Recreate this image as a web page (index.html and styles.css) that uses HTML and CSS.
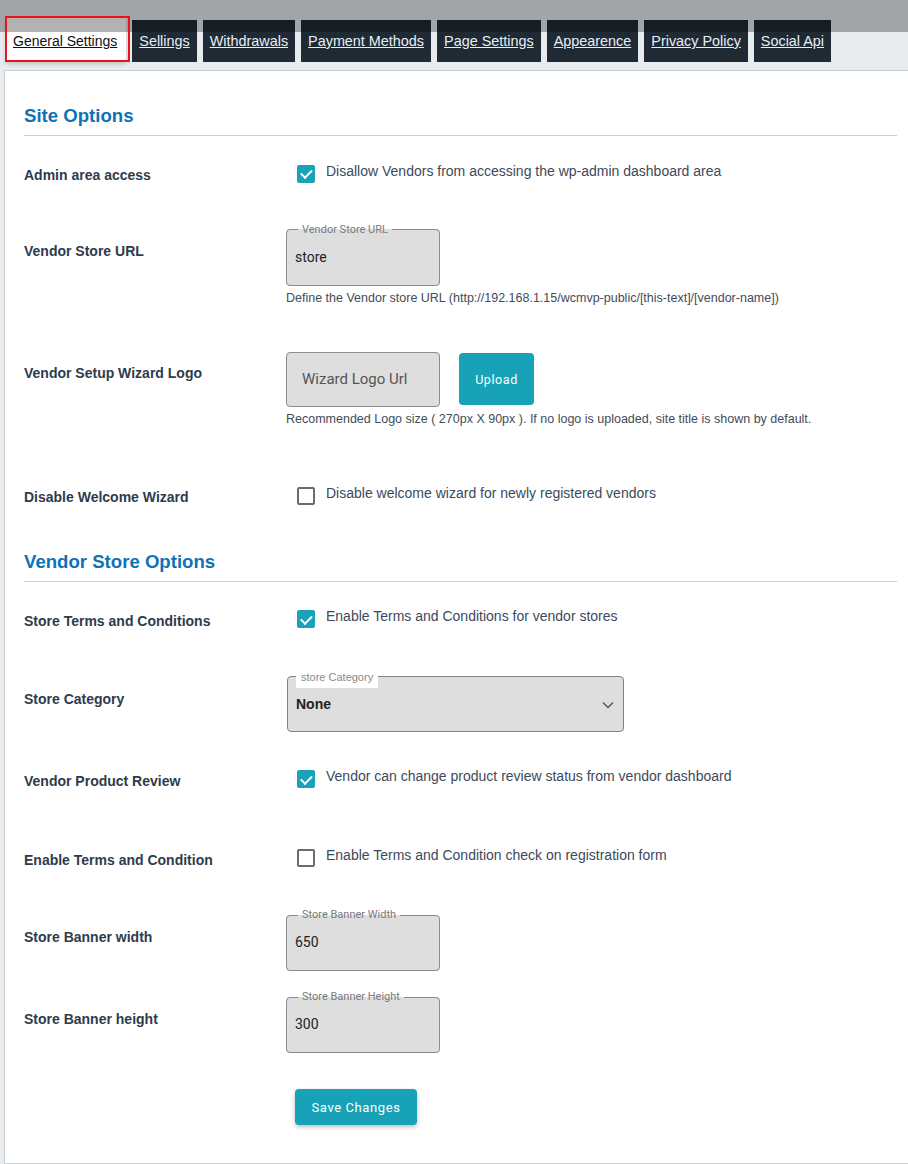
FILE: index.html
```html
<!DOCTYPE html>
<html>
<head>
<meta charset="utf-8">
<link rel="stylesheet" href="styles.css">
</head>
<body>
<div class="dim"></div>
<nav class="tabs">
  <a class="tab active" href="#">General Settings</a>
  <a class="tab" href="#">Sellings</a>
  <a class="tab" href="#">Withdrawals</a>
  <a class="tab" href="#">Payment Methods</a>
  <a class="tab" href="#">Page Settings</a>
  <a class="tab" href="#">Appearence</a>
  <a class="tab" href="#">Privacy Policy</a>
  <a class="tab" href="#">Social Api</a>
</nav>
<main class="panel">
  <h2 class="section-title">Site Options</h2>
  <div class="grid grid-site">
    <div class="label label-check">Admin area access</div>
    <div class="check"><span class="box on"></span><span class="check-text">Disallow Vendors from accessing the wp-admin dashboard area</span></div>

    <div class="label label-field">Vendor Store URL</div>
    <div class="stack">
      <fieldset class="field"><legend>Vendor Store URL</legend><div class="value">store</div></fieldset>
      <div class="help">Define the Vendor store URL (http://192.168.1.15/wcmvp-public/[this-text]/[vendor-name])</div>
    </div>

    <div class="label label-plain">Vendor Setup Wizard Logo</div>
    <div class="stack">
      <div class="upload-row">
        <div class="plain-input">Wizard Logo Url</div>
        <button class="btn btn-upload">Upload</button>
      </div>
      <div class="help">Recommended Logo size ( 270px X 90px ). If no logo is uploaded, site title is shown by default.</div>
    </div>

    <div class="label label-check">Disable Welcome Wizard</div>
    <div class="check"><span class="box"></span><span class="check-text">Disable welcome wizard for newly registered vendors</span></div>
  </div>

  <h2 class="section-title">Vendor Store Options</h2>
  <div class="grid grid-store">
    <div class="label label-check">Store Terms and Conditions</div>
    <div class="check"><span class="box on"></span><span class="check-text">Enable Terms and Conditions for vendor stores</span></div>

    <div class="label label-field">Store Category</div>
    <div class="select-wrap">
      <span class="select-legend">store Category</span>
      <div class="select-box"><span class="select-value">None</span>
        <svg class="chev" width="12" height="8" viewBox="0 0 12 8"><path d="M1 1.5 L6 6.5 L11 1.5" fill="none" stroke="#555" stroke-width="1.4"/></svg>
      </div>
    </div>

    <div class="label label-check">Vendor Product Review</div>
    <div class="check"><span class="box on"></span><span class="check-text">Vendor can change product review status from vendor dashboard</span></div>

    <div class="label label-check">Enable Terms and Condition</div>
    <div class="check"><span class="box"></span><span class="check-text">Enable Terms and Condition check on registration form</span></div>

    <div class="label label-field">Store Banner width</div>
    <div class="stack">
      <fieldset class="field"><legend>Store Banner Width</legend><div class="value">650</div></fieldset>
    </div>

    <div class="label label-field">Store Banner height</div>
    <div class="stack">
      <fieldset class="field"><legend>Store Banner Height</legend><div class="value">300</div></fieldset>
    </div>

    <div></div>
    <div><button class="btn btn-save">Save Changes</button></div>
  </div>
</main>
</body>
</html>
```
FILE: styles.css
```css
html { overflow: hidden; }
body {
  margin: 0;
  background: #e9ecef;
  font-family: "Liberation Sans", Arial, sans-serif;
  position: relative;
}
.dim {
  position: absolute;
  top: 0; left: 0; right: 0;
  height: 32px;
  background: rgba(0, 0, 0, 0.3);
  z-index: 2;
}
.tabs {
  display: flex;
  align-items: flex-end;
  gap: 6px;
  padding: 18px 0 0 6px;
}
.tab {
  display: block;
  height: 42px;
  line-height: 42px;
  padding: 0 7px;
  background: #1f2a35;
  color: #e8eef4;
  font-size: 14.4px;
  text-decoration: underline;
  text-underline-offset: 1px;
}
.tab.active {
  background: #fff;
  color: #111;
  height: 44px;
  line-height: 46px;
  padding: 0 9px 0 7px;
  font-size: 14px;
  position: relative;
  box-shadow: 0 2px 4px rgba(0,0,0,0.18);
}
.tab.active::after {
  content: "";
  position: absolute;
  left: -1px; right: -4px; top: -2px; bottom: 0;
  border: 2px solid #e8141b;
  z-index: 3;
}
.panel {
  margin: 8px 0 0 4px;
  background: #fff;
  border: 1px solid #c9cdd1;
  border-right: none;
  padding: 33px 11px 38px 19px;
}
.section-title {
  margin: 0 0 25.5px;
  font-size: 18.6px;
  line-height: 24px;
  font-weight: bold;
  color: #0f72b6;
  padding-bottom: 7px;
  border-bottom: 1px solid #cfcfcf;
}
.grid {
  display: grid;
  grid-template-columns: 262px 1fr;
  align-items: start;
}
.grid-site { grid-template-rows: 62px 128px 132px 66px; }
.grid-store { grid-template-rows: 64px 96px 79px 63px 82px 98px 36px; }
.label {
  font-size: 14px;
  font-weight: bold;
  line-height: 17px;
  color: #2e3b4c;
}
.label-check { margin-top: 5.5px; }
.label-field { margin-top: 19.5px; }
.label-plain { margin-top: 13.5px; }

.check {
  display: flex;
  align-items: flex-start;
  gap: 11px;
  padding-left: 11px;
}
.box {
  box-sizing: border-box;
  flex: none;
  width: 18px;
  height: 18px;
  margin-top: 3px;
  border: 2px solid #6b6b6b;
  border-radius: 2px;
  background: #fff;
  position: relative;
}
.box.on {
  background: #1aa3b8;
  border-color: #1aa3b8;
}
.box.on::after {
  content: "";
  position: absolute;
  left: 3.5px; top: 0.5px;
  width: 4.5px; height: 9px;
  border: solid #fff;
  border-width: 0 2px 2px 0;
  transform: rotate(45deg);
}
.check-text {
  font-size: 14px;
  line-height: 18px;
  color: #3c4a5c;
}
.stack {
  display: flex;
  flex-direction: column;
  align-items: flex-start;
}
.field {
  box-sizing: border-box;
  width: 154px;
  margin: 0;
  padding: 0 8px;
  min-inline-size: 0;
  border: 1px solid #8c8c8c;
  border-radius: 4px;
  background: #dedede;
}
.field legend {
  margin-left: 3px;
  padding: 0 4px;
  font-family: Roboto, "Liberation Sans", sans-serif;
  font-size: 11px;
  line-height: 12px;
  color: #7a7a7a;
}
.value {
  height: 49px;
  line-height: 42px;
  font-family: Roboto, "Liberation Sans", sans-serif;
  font-size: 14px;
  color: #222;
}
.help {
  margin-top: 5px;
  font-size: 12.5px;
  line-height: 15px;
  color: #3f4c5a;
  white-space: nowrap;
}
.upload-row {
  display: flex;
  align-items: center;
  gap: 19px;
}
.plain-input {
  box-sizing: border-box;
  width: 154px;
  height: 55px;
  border: 1px solid #8c8c8c;
  border-radius: 4px;
  background: #dedede;
  padding-left: 15px;
  line-height: 53px;
  font-family: Roboto, "Liberation Sans", sans-serif;
  font-size: 15px;
  color: #555;
}
.btn {
  border: none;
  border-radius: 4px;
  background: #17a2b8;
  color: #fff;
  font-family: Roboto, "Liberation Sans", sans-serif;
  letter-spacing: 0.6px;
  cursor: pointer;
}
.btn-upload {
  width: 75px;
  height: 52px;
  font-size: 12.5px;
  font-weight: 400;
  padding: 0;
}
.btn-save {
  margin-left: 9px;
  width: 122px;
  height: 36px;
  font-size: 13px;
  padding: 0;
  box-shadow: 0 2px 4px rgba(0,0,0,0.25);
}
.select-wrap {
  position: relative;
  padding-top: 5px;
  margin-left: 1px;
  width: 337px;
}
.select-legend {
  position: absolute;
  top: 0; left: 9px;
  background: #fff;
  padding: 0 5px 4px;
  font-size: 11px;
  line-height: 13px;
  color: #8a8a8a;
}
.select-box {
  box-sizing: border-box;
  height: 56px;
  border: 1px solid #7d838a;
  border-radius: 4px;
  background: #dedede;
  display: flex;
  align-items: center;
  justify-content: space-between;
  padding: 0 9px 0 8px;
}
.select-value {
  font-size: 14px;
  font-weight: bold;
  color: #222;
}
.chev { margin-top: 2px; }
```
